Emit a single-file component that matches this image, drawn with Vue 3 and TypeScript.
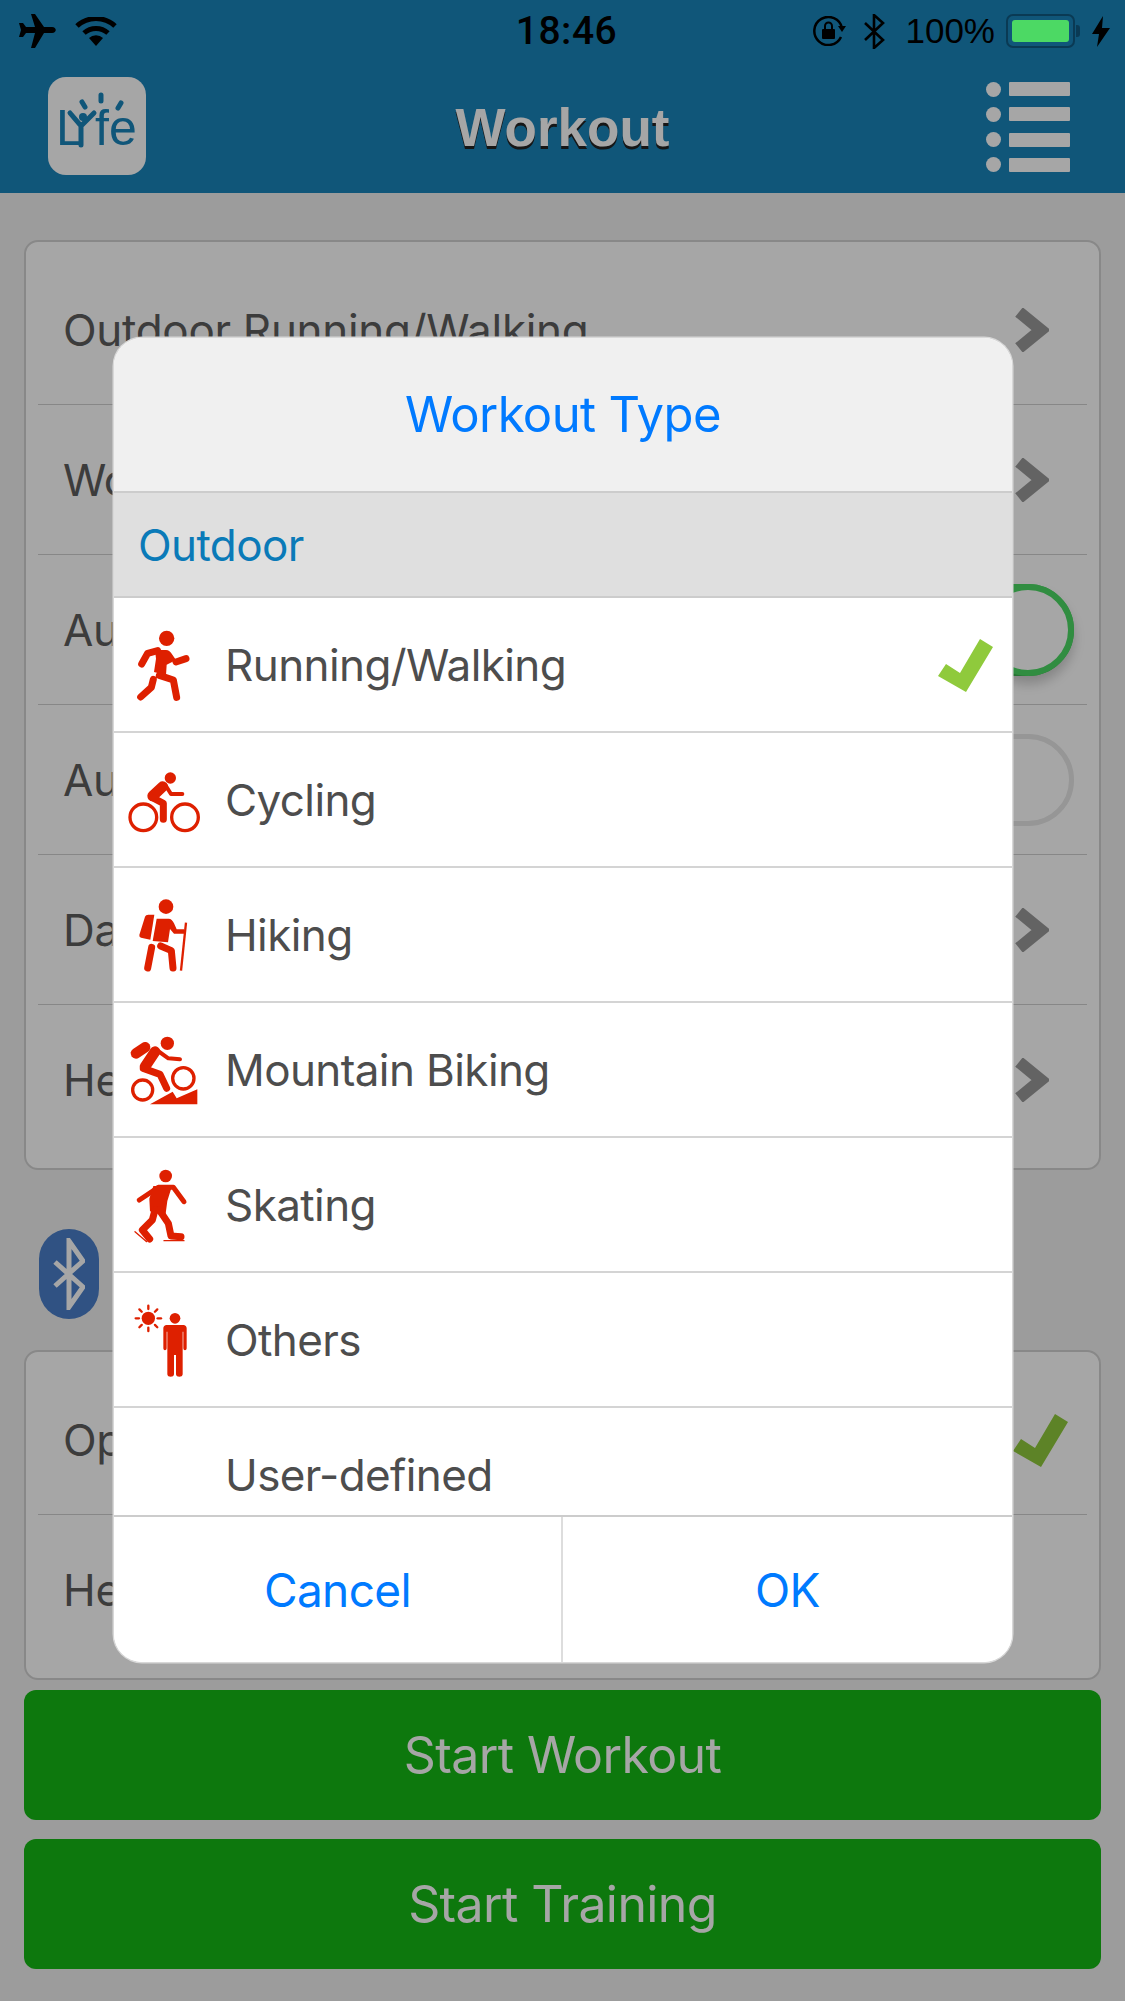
<script setup lang="ts">
type Setting = { label: string; kind: 'link' | 'on' | 'off' | 'check' | 'none' }

const mainSettings: Setting[] = [
  { label: 'Outdoor Running/Walking', kind: 'link' },
  { label: 'Workout Goal', kind: 'link' },
  { label: 'Auto Pause', kind: 'on' },
  { label: 'Auto Lap', kind: 'off' },
  { label: 'Data Fields', kind: 'link' },
  { label: 'Heart Rate Zone', kind: 'link' },
]
const sensorSettings: Setting[] = [
  { label: 'Optical Heart Rate', kind: 'check' },
  { label: 'Heart Rate Belt', kind: 'none' },
]
const workoutTypes = ['running', 'cycling', 'hiking', 'mountain', 'skating', 'others', 'user']
const typeLabels: Record<string, string> = {
  running: 'Running/Walking',
  cycling: 'Cycling',
  hiking: 'Hiking',
  mountain: 'Mountain Biking',
  skating: 'Skating',
  others: 'Others',
  user: 'User-defined',
}
const sunRays = [0, 45, 90, 135, 180, 225, 270, 315]
</script>

<template>
  <div class="page">
    <header class="top">
      <div class="status">
        <div class="status-left">
          <svg class="st-plane" viewBox="0 0 38 34"><path d="M13 0h4l9 13h8c5 0 5 6 0 6h-8l-9 15h-4l4-15H8l-3 4H1l2-7-2-7h4l3 4h9z" /></svg>
          <svg class="st-wifi" viewBox="0 0 42 29">
            <path d="M2 9a28 28 0 0 1 38 0" class="wifi-arc" />
            <path d="M9 16a18 18 0 0 1 24 0" class="wifi-arc" />
            <path d="M21 29l-7-8a10 10 0 0 1 14 0z" />
          </svg>
        </div>
        <div class="time">18:46</div>
        <div class="status-right">
          <svg class="st-lock" viewBox="0 0 34 30">
            <path d="M29 21a14 14 0 1 1 1-9" class="lock-ring" />
            <path d="M26 10h8l-4 6z" />
            <rect x="10" y="13" width="13" height="10" rx="1" />
            <path d="M13 13v-3a3.500 3.500 0 0 1 7 0v3" class="lock-hasp" />
          </svg>
          <svg class="st-bt" viewBox="0 0 21 35"><path d="M1 9l18 17-9 8V1l9 8L1 26" class="bt-line" /></svg>
          <span class="pct">100%</span>
          <div class="battery"><div class="battery-fill" /></div>
          <svg class="st-bolt" viewBox="0 0 18 31"><path d="M11 0L0 18h7l-2 13L18 12h-8z" /></svg>
        </div>
      </div>
      <div class="nav">
        <div class="logo">
          <svg viewBox="0 0 98 98" width="98" height="98">
            <text x="8" y="68" class="logo-text">L</text>
            <text x="47" y="68" class="logo-text">fe</text>
            <circle cx="35" cy="40" r="4" />
            <path d="M22 36l11 13v19M46 36L33 49" class="logo-man" />
            <path d="M53 18v6M34 25l3 5M73 26l-3 5" class="logo-man" />
          </svg>
        </div>
        <div class="title">Workout</div>
        <div class="menu">
          <div v-for="n in 4" :key="n" class="menu-line"><span class="menu-dot" /><span class="menu-bar" /></div>
        </div>
      </div>
    </header>

    <main class="content">
      <section class="card">
        <div v-for="row in mainSettings" :key="row.label" class="set-row">
          <span class="set-label">{{ row.label }}</span>
          <svg v-if="row.kind === 'link'" class="chevron" viewBox="0 0 36 44"><path d="M6 4l22 18L6 40" /></svg>
          <span v-else-if="row.kind === 'on'" class="toggle on"><span class="knob" /></span>
          <span v-else-if="row.kind === 'off'" class="toggle" />
        </div>
      </section>

      <div class="bt-row">
        <div class="bt-badge">
          <svg viewBox="0 0 32 72" width="32" height="72"><path d="M2 24l28 25-14 20V3l14 20L2 48" /></svg>
        </div>
      </div>

      <section class="card">
        <div v-for="row in sensorSettings" :key="row.label" class="set-row">
          <span class="set-label">{{ row.label }}</span>
          <svg v-if="row.kind === 'check'" class="check check-card" viewBox="0 0 56 54"><path d="M1 38l8-12 14 9L43 1l13 8-27 45z" /></svg>
        </div>
      </section>

      <button class="start first">Start Workout</button>
      <button class="start">Start Training</button>
    </main>

    <div class="scrim">
      <div class="dialog">
        <div class="dlg-title">Workout Type</div>
        <div class="dlg-section">Outdoor</div>
        <div class="dlg-list">
          <div v-for="(t, i) in workoutTypes" :key="t" class="type-row">
            <!-- icon coordinates were measured on a 3x crop, hence the 240 box -->
            <svg v-if="t === 'running'" class="type-icon" viewBox="75 75 240 240">
              <circle cx="200" cy="115" r="23" />
              <path d="M165 150h33c8 0 12 4 16 10l14 20-28 14-2 32-36-10 6-40z" />
              <path d="M125 192l18-32 30-8M228 186l30-10" class="limb" />
              <path d="M178 226l42 14 10 52M160 238l-6 24-32 29" class="limb" />
            </svg>
            <svg v-else-if="t === 'cycling'" class="type-icon" viewBox="75 480 240 240">
              <circle cx="211" cy="534" r="17" />
              <circle cx="130" cy="652" r="40" class="wheel" />
              <circle cx="255" cy="652" r="40" class="wheel" />
              <path d="M188 560l-30 28" class="limb thick" />
              <path d="M196 555l17 27h34" class="limb thin" />
              <path d="M156 592l34 18v48" class="limb" />
            </svg>
            <svg v-else-if="t === 'hiking'" class="type-icon" viewBox="75 75 240 240">
              <circle cx="198" cy="110" r="22" />
              <path d="M135 140q2-6 10-6h18l-12 75-28-6q-6-2-5-8z" />
              <path d="M170 146h36q10 0 16 14l8 18h22v13h-30l-12-14-6 40-46-4z" />
              <path d="M182 228l32 14 5 52M155 232l-12 62" class="limb" />
              <path d="M258 158l-15 144" class="limb hair" />
            </svg>
            <svg v-else-if="t === 'mountain'" class="type-icon" viewBox="75 90 240 240">
              <circle cx="202" cy="130" r="20" />
              <path d="M108 160l27-18" class="limb backpack" />
              <path d="M165 155l-30 45" class="limb thick" />
              <path d="M170 150l35 25 35 3" class="limb thin" />
              <path d="M130 205l50 18 20 42" class="limb" />
              <circle cx="128" cy="270" r="30" class="wheel small" />
              <circle cx="250" cy="235" r="32" class="wheel small" />
              <path d="M150 313l68-38 12 20 62-27v45z" />
            </svg>
            <svg v-else-if="t === 'skating'" class="type-icon" viewBox="75 495 240 240">
              <circle cx="197" cy="528" r="19" />
              <path d="M118 600l57-38h45l32 43" class="limb thin2" />
              <path d="M160 558h56l-14 45-6 45-46-14-2-38z" />
              <path d="M165 630l-8 30-30 30 22 27" class="limb" />
              <path d="M178 630l27 40 8 38 30 2" class="limb" />
              <path d="M105 695l35 30M192 722h60" class="limb wire" />
            </svg>
            <svg v-else-if="t === 'others'" class="type-icon" viewBox="75 900 240 240">
              <circle cx="145" cy="955" r="20" />
              <path v-for="a in sunRays" :key="a" d="M145 917v10" class="limb ray" :transform="`rotate(${a} 145 955)`" />
              <circle cx="225" cy="955" r="16" />
              <path d="M200 975h50c6 0 10 4 10 10v60c0 8-10 8-10 0v-50h-2v128c0 10-20 10-20 0v-58h-6v58c0 10-20 10-20 0V995h-2v50c0 8-10 8-10 0v-60c0-6 4-10 10-10z" />
            </svg>
            <span v-else class="type-icon" />
            <span class="type-label">{{ typeLabels[t] }}</span>
            <svg v-if="i === 0" class="check" viewBox="0 0 56 54"><path d="M1 38l8-12 14 9L43 1l13 8-27 45z" /></svg>
          </div>
        </div>
        <div class="dlg-actions">
          <button class="dlg-btn">Cancel</button>
          <button class="dlg-btn">OK</button>
        </div>
      </div>
    </div>
  </div>
</template>

<style>
html, body { margin: 0; background: #f0f0f0; }
</style>

<style scoped>
.page {
  position: relative;
  height: 2001px;
  overflow: hidden;
  background: #f0f0f0;
  font-family: Inter, Roboto, sans-serif;
  color: #5c5c5c;
}

/* -- Header --------------------------------------------------------------- */
.top {
  height: 193px;
  background: #1984bb;
  box-sizing: border-box;
}
.status {
  position: relative;
  z-index: 5;
  height: 62px;
  display: grid;
  grid-template-columns: 1fr auto 1fr;
  align-items: center;
  color: #000;
}
.status svg { display: block; fill: #000; }
.status-left { display: flex; align-items: center; gap: 19px; padding-left: 18px; }
.status-right { display: flex; align-items: center; justify-content: flex-end; padding-right: 15px; }
.st-plane { width: 38px; height: 34px; }
.st-wifi { width: 42px; height: 29px; }
.wifi-arc { fill: none !important; stroke: #000; stroke-width: 5; }
.time {
  font: 500 39px Roboto, sans-serif;
  letter-spacing: 0.5px;
  padding-left: 8px;
}
.st-lock { width: 34px; height: 30px; margin-right: 18px; }
.lock-ring { fill: none !important; stroke: #000; stroke-width: 2.5; }
.lock-hasp { fill: none !important; stroke: #000; stroke-width: 2; }
.st-bt { width: 21px; height: 35px; margin-right: 20px; }
.bt-line { fill: none !important; stroke: #000; stroke-width: 2.6; }
.pct { font: 400 35px "Liberation Sans", Arial, sans-serif; margin-right: 11px; }
.battery {
  position: relative;
  width: 69px;
  height: 34px;
  box-sizing: border-box;
  padding: 4px;
  border: 2px solid #0a3a54;
  border-radius: 7px;
  margin-right: 17px;
}
.battery::after {
  content: '';
  position: absolute;
  right: -7px;
  top: 9px;
  width: 4px;
  height: 12px;
  background: #0a3a54;
  border-radius: 0 3px 3px 0;
}
.battery-fill { height: 100%; background: #4cd964; border-radius: 3px; }
.st-bolt { width: 18px; height: 31px; }

.nav {
  display: flex;
  align-items: flex-start;
  justify-content: space-between;
  padding: 15px 55px 0 48px;
  position: relative;
}
.logo {
  width: 98px;
  height: 98px;
  background: #fff;
  border-radius: 18px;
}
.logo svg { display: block; fill: #1984bb; }
.logo-text { font: 400 50px "Liberation Sans", Arial, sans-serif; fill: #1984bb; }
.logo-man { fill: none; stroke: #1984bb; stroke-width: 5; stroke-linecap: round; }
.title {
  position: absolute;
  left: 0;
  right: 0;
  top: 35px;
  text-align: center;
  font: 700 53px "Liberation Sans", Arial, sans-serif;
  color: #fff;
  text-shadow: 0 3px 0 #222;
}
.menu { display: flex; flex-direction: column; gap: 11.300px; padding-top: 5px; }
.menu-line { display: flex; align-items: center; gap: 8px; height: 14px; }
.menu-dot { width: 15px; height: 15px; border-radius: 50%; background: #fff; }
.menu-bar { width: 61px; height: 14px; background: #fff; border-radius: 1px; }

/* -- Page content --------------------------------------------------------- */
.content {
  display: flex;
  flex-direction: column;
  padding: 47px 24px 0;
}
.card {
  background: #fff;
  border: 2px solid #d2d2d2;
  border-radius: 14px;
  padding: 13px 12px;
}
.set-row {
  height: 150px;
  box-sizing: border-box;
  display: flex;
  align-items: center;
  justify-content: space-between;
  padding: 0 13px 0 25px;
  border-bottom: 1px solid #cfcfcf;
  position: relative;
}
.set-row:last-child { border-bottom: none; }
.set-label { font-size: 44px; letter-spacing: -0.3px; white-space: nowrap; }
.chevron { width: 36px; height: 44px; fill: none; stroke: #999; stroke-width: 12; margin-right: 25px; }
.toggle {
  position: relative;
  width: 150px;
  height: 92px;
  box-sizing: border-box;
  border: 5px solid #e6e6e6;
  border-radius: 46px;
}
.toggle.on { border-color: #4cd964; background: #4cd964; }
.knob {
  position: absolute;
  right: -5px;
  top: -5px;
  width: 92px;
  height: 92px;
  box-sizing: border-box;
  border: 6px solid #4cd964;
  border-radius: 50%;
  background: #fff;
  box-shadow: 0 8px 12px rgba(0, 0, 0, 0.2);
}
.check { width: 56px; height: 54px; fill: #8fca3c; flex: none; }
.check-card { margin-right: 6px; }
.bt-row { height: 180px; box-sizing: border-box; padding: 59px 0 0 15px; flex: none; }
.bt-badge {
  width: 60px;
  height: 90px;
  background: #4a7fc9;
  border-radius: 30px;
  display: flex;
  align-items: center;
  justify-content: center;
}
.bt-badge svg { fill: none; stroke: #fff; stroke-width: 5; }
.start {
  height: 130px;
  border: none;
  border-radius: 12px;
  background: #14b814;
  color: #fff;
  font: 400 50px Inter, Roboto, sans-serif;
  letter-spacing: -0.6px;
  margin-top: 19px;
  flex: none;
}
.start.first { margin-top: 10px; }

/* -- Dialog --------------------------------------------------------------- */
.scrim {
  position: absolute;
  inset: 0;
  z-index: 3;
  background: rgba(0, 0, 0, 0.35);
  display: flex;
  justify-content: center;
  align-items: flex-start;
  padding: 338px 0 0 1px;
  box-sizing: border-box;
}
.dialog {
  width: 898px;
  height: 1324px;
  display: flex;
  flex-direction: column;
  background: #fff;
  border-radius: 28px;
  overflow: hidden;
  box-shadow: 0 0 0 1.500px #d8d8d8;
}
.dlg-title {
  height: 155px;
  flex: none;
  display: flex;
  align-items: center;
  justify-content: center;
  background: #f0f0f0;
  color: #007aff;
  font-size: 49px;
  letter-spacing: -0.6px;
  border-bottom: 2px solid #ccc;
  box-sizing: border-box;
}
.dlg-section {
  height: 103px;
  flex: none;
  display: flex;
  align-items: center;
  padding-left: 24px;
  background: #dfdfdf;
  color: #0a7ab8;
  font-size: 44px;
  letter-spacing: -0.6px;
  box-sizing: border-box;
}
.dlg-list { flex: 1; overflow: hidden; min-height: 0; }
.type-row {
  height: 135px;
  box-sizing: border-box;
  display: flex;
  align-items: center;
  padding: 0 19px 0 11px;
  border-top: 2px solid #d4d4d4;
  color: #4d4d4d;
}
.type-row:first-child { border-top-color: #ccc; }
.type-icon { width: 80px; height: 80px; flex: none; fill: #de2000; }
.type-label { flex: 1; margin-left: 20px; font-size: 44px; letter-spacing: -0.6px; }
.limb { stroke: #de2000; stroke-width: 21; stroke-linecap: round; stroke-linejoin: round; fill: none; }
.limb.thick { stroke-width: 32; }
.limb.thin { stroke-width: 12; }
.limb.thin2 { stroke-width: 15; }
.limb.hair { stroke-width: 7; stroke-linecap: butt; }
.limb.wire { stroke-width: 4; }
.limb.ray { stroke-width: 7; }
.limb.backpack { stroke-width: 32; }
.wheel { fill: none; stroke: #de2000; stroke-width: 10; }
.dlg-actions {
  height: 147px;
  flex: none;
  display: grid;
  grid-template-columns: 1fr 1fr;
  border-top: 2px solid #ccc;
  box-sizing: border-box;
}
.dlg-btn {
  background: #fff;
  border: none;
  color: #007aff;
  font: 400 46px Inter, Roboto, sans-serif;
  letter-spacing: -0.6px;
}
.dlg-btn:first-child { border-right: 2px solid #ddd; }
</style>
